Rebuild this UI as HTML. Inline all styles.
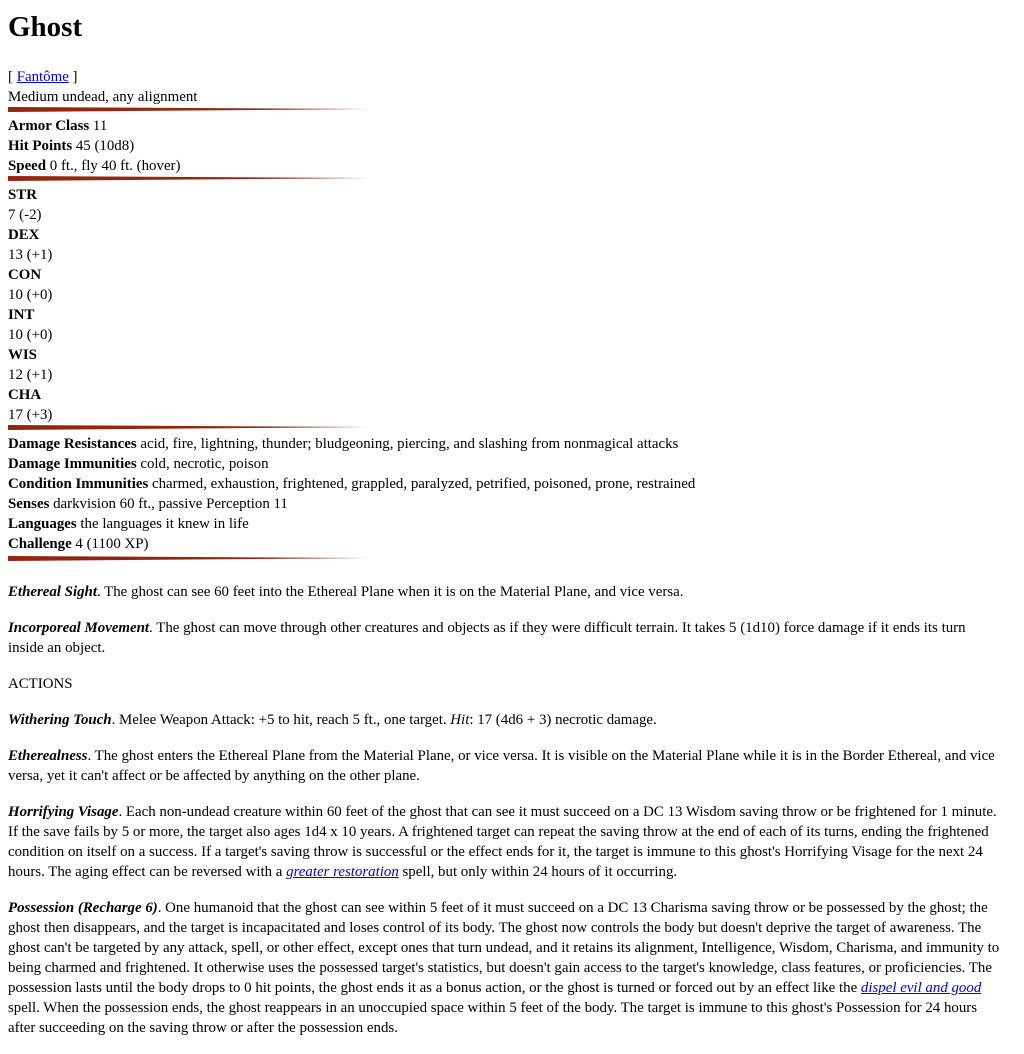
<!DOCTYPE html>
<html><head><meta charset="utf-8"><style>
body{margin:9px 8px 8px;font-family:"Liberation Serif",serif;font-size:14.9px;line-height:20px;color:#000;background:#fff;}
h1{font-size:29px;line-height:36px;margin:8px 0 22px;font-weight:bold;}
a{color:#0000ee;}
.d{display:block;margin:0 0 4px;}
p{margin:0 0 16px;}
</style></head><body>
<h1>Ghost</h1>
<div>[ <a href="#">Fantôme</a> ]</div>
<div>Medium undead, any alignment</div>
<svg class="d" width="360" height="5"><polygon points="0,0 360,2 0,5" fill="#922610"/></svg>
<div><b>Armor Class</b> 11</div>
<div><b>Hit Points</b> 45 (10d8)</div>
<div><b>Speed</b> 0 ft., fly 40 ft. (hover)</div>
<svg class="d" width="360" height="5"><polygon points="0,0 360,2 0,5" fill="#922610"/></svg>
<div><b>STR</b></div><div>7 (-2)</div>
<div><b>DEX</b></div><div>13 (+1)</div>
<div><b>CON</b></div><div>10 (+0)</div>
<div><b>INT</b></div><div>10 (+0)</div>
<div><b>WIS</b></div><div>12 (+1)</div>
<div><b>CHA</b></div><div>17 (+3)</div>
<svg class="d" width="360" height="5"><polygon points="0,0 360,2 0,5" fill="#922610"/></svg>
<div><b>Damage Resistances</b> acid, fire, lightning, thunder; bludgeoning, piercing, and slashing from nonmagical attacks</div>
<div><b>Damage Immunities</b> cold, necrotic, poison</div>
<div><b>Condition Immunities</b> charmed, exhaustion, frightened, grappled, paralyzed, petrified, poisoned, prone, restrained</div>
<div><b>Senses</b> darkvision 60 ft., passive Perception 11</div>
<div><b>Languages</b> the languages it knew in life</div>
<div><b>Challenge</b> 4 (1100 XP)</div>
<svg class="d" width="360" height="5" style="margin-top:2px;margin-bottom:21px"><polygon points="0,0 360,2 0,5" fill="#922610"/></svg>
<p><b><i>Ethereal Sight</i></b>. The ghost can see 60 feet into the Ethereal Plane when it is on the Material Plane, and vice versa.</p>
<p><b><i>Incorporeal Movement</i></b>. The ghost can move through other creatures and objects as if they were difficult terrain. It takes 5 (1d10) force damage if it ends its turn<br>inside an object.</p>
<p>ACTIONS</p>
<p><b><i>Withering Touch</i></b>. Melee Weapon Attack: +5 to hit, reach 5 ft., one target. <i>Hit</i>: 17 (4d6 + 3) necrotic damage.</p>
<p><b><i>Etherealness</i></b>. The ghost enters the Ethereal Plane from the Material Plane, or vice versa. It is visible on the Material Plane while it is in the Border Ethereal, and vice<br>versa, yet it can't affect or be affected by anything on the other plane.</p>
<p><b><i>Horrifying Visage</i></b>. Each non-undead creature within 60 feet of the ghost that can see it must succeed on a DC 13 Wisdom saving throw or be frightened for 1 minute.<br>If the save fails by 5 or more, the target also ages 1d4 x 10 years. A frightened target can repeat the saving throw at the end of each of its turns, ending the frightened<br>condition on itself on a success. If a target's saving throw is successful or the effect ends for it, the target is immune to this ghost's Horrifying Visage for the next 24<br>hours. The aging effect can be reversed with a <i><a href="#">greater restoration</a></i> spell, but only within 24 hours of it occurring.</p>
<p><b><i>Possession (Recharge 6)</i></b>. One humanoid that the ghost can see within 5 feet of it must succeed on a DC 13 Charisma saving throw or be possessed by the ghost; the<br>ghost then disappears, and the target is incapacitated and loses control of its body. The ghost now controls the body but doesn't deprive the target of awareness. The<br>ghost can't be targeted by any attack, spell, or other effect, except ones that turn undead, and it retains its alignment, Intelligence, Wisdom, Charisma, and immunity to<br>being charmed and frightened. It otherwise uses the possessed target's statistics, but doesn't gain access to the target's knowledge, class features, or proficiencies. The<br>possession lasts until the body drops to 0 hit points, the ghost ends it as a bonus action, or the ghost is turned or forced out by an effect like the <i><a href="#">dispel evil and good</a></i><br>spell. When the possession ends, the ghost reappears in an unoccupied space within 5 feet of the body. The target is immune to this ghost's Possession for 24 hours<br>after succeeding on the saving throw or after the possession ends.</p>
</body></html>
